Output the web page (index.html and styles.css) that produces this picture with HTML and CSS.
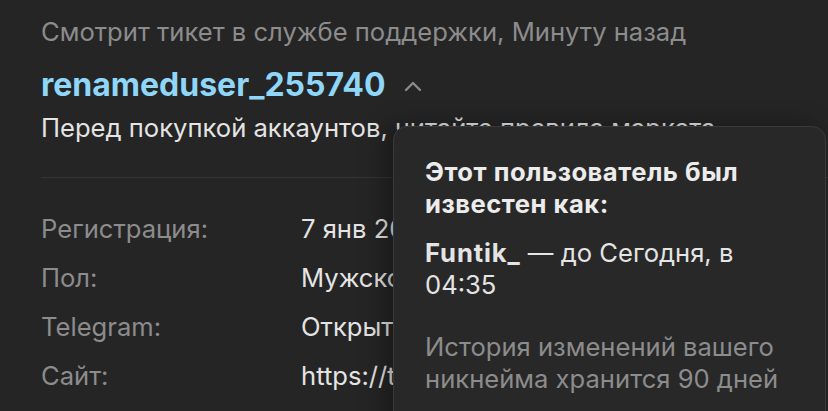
FILE: index.html
```html
<!DOCTYPE html>
<html lang="ru">
<head>
    <meta charset="UTF-8" />
    <title>Профиль пользователя</title>
    <link rel="stylesheet" href="styles.css">
</head>
<body>

<div class="profile">
    <div class="status">Смотрит тикет в службе поддержки, Минуту назад</div>

    <div class="name-row">
        <span class="username">renameduser_255740</span>
        <svg class="chevron" width="18" height="12" viewBox="0 0 18 12">
            <path d="M2 10 L9 3 L16 10" fill="none" stroke="#8a8a8a" stroke-width="2.4" stroke-linecap="round" stroke-linejoin="round"/>
        </svg>
    </div>

    <div class="motto">Перед покупкой аккаунтов, читайте правила маркета</div>

    <div class="divider"></div>

    <div class="info">
        <div class="info-row">
            <span class="label">Регистрация:</span>
            <span class="value">7 янв 2022</span>
        </div>
        <div class="info-row">
            <span class="label">Пол:</span>
            <span class="value">Мужской</span>
        </div>
        <div class="info-row">
            <span class="label">Telegram:</span>
            <span class="value">Открыть</span>
        </div>
        <div class="info-row">
            <span class="label">Сайт:</span>
            <span class="value">https://t.me/</span>
        </div>
    </div>

    <!-- popup over the profile -->
    <div class="tooltip">
        <div class="tip-title">Этот пользователь был известен как:</div>
        <div class="tip-entry"><b>Funtik_</b> — до Сегодня, в 04:35</div>
        <div class="tip-note">История изменений вашего никнейма хранится 90 дней</div>
    </div>
</div>

</body>
</html>
```

FILE: styles.css
```css
/* PAGE */
html, body {
    margin: 0;
    padding: 0;
    height: 100%;
    background: #252525;
    font-family: Inter, "Noto Sans", sans-serif;
    overflow: hidden;
}

.profile {
    position: relative;
    height: 100%;
    padding: 16px 0 0 41px;
    box-sizing: border-box;
    font-size: 25.6px;
    line-height: 32px;
    color: #e4e4e4;
}

.status {
    color: #8c8c8c;
}

.name-row {
    display: flex;
    align-items: center;
    gap: 19px;
    margin-top: 17px;
    height: 40px;
}

.username {
    font-size: 32px;
    font-weight: 700;
    color: #8fd6f8;
    line-height: 40px;
}

.chevron {
    margin-top: 2px;
}

.motto {
    margin-top: 7px;
    white-space: nowrap;
}

.divider {
    height: 1px;
    background: #343434;
    margin-top: 33px;
}

.info {
    margin-top: 26px;
}

.info-row {
    display: flex;
    height: 49px;
    align-items: center;
}

.label {
    width: 260px;
    color: #8c8c8c;
}

/* values are cut off by the popup */
.value {
    width: 92px;
    overflow: hidden;
    color: #e4e4e4;
    white-space: nowrap;
}

/* POPUP */
.tooltip {
    position: absolute;
    top: 126px;
    left: 393px;
    width: 433px;
    height: 320px;
    box-sizing: border-box;
    padding: 29px 30px 0 31px;
    background: #282828;
    border: 1px solid #3a3a3a;
    border-radius: 14px;
    box-shadow: -8px 0 24px rgba(0,0,0,0.35);
}

.tip-title {
    font-weight: 700;
    color: #ececec;
    letter-spacing: 0.5px;
}

.tip-entry {
    margin-top: 17px;
    color: #e4e4e4;
}
.tip-entry b {
    font-weight: 700;
    letter-spacing: 0.9px;
}

.tip-note {
    margin-top: 30px;
    color: #8c8c8c;
}
```
